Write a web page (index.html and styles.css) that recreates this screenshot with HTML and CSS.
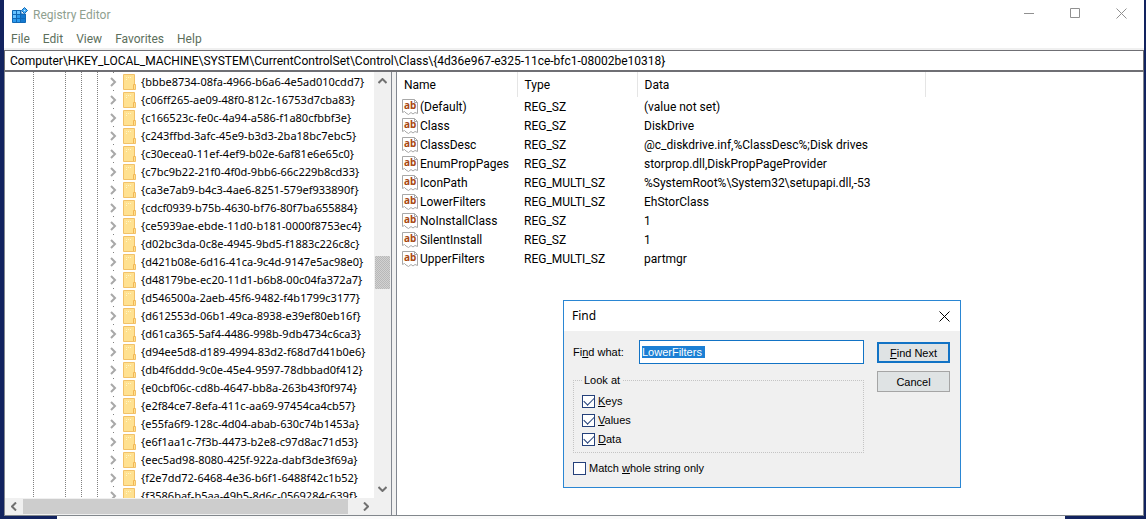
FILE: index.html
```
<!DOCTYPE html>
<html lang="en">
<head>
    <meta charset="UTF-8">
    <meta name="viewport" content="width=device-width, initial-scale=1.0">
    <title>Registry Editor</title>
    <link rel="stylesheet" href="styles.css">
</head>
<body>
    <svg class="symbols" aria-hidden="true">
        <symbol id="chevron" viewBox="0 0 8 10">
            <path d="M2 1 L6 5 L2 9" fill="none" stroke="#a8a8a8" stroke-width="2"/>
        </symbol>
        <symbol id="folder" viewBox="0 0 13 16">
            <path d="M.5 .5H11.5V10.5H12.5V15.5H.5Z" fill="#ffe191" stroke="#f2c168"/>
            <path d="M10.5 15V10.5H12" fill="none" stroke="#f2b654"/>
            <path d="M3.5 6V3.5H9" fill="none" stroke="#fff6c8" stroke-dasharray="1 1"/>
        </symbol>
        <symbol id="page" viewBox="0 0 16 16">
            <path d="M.5 .5H12.5L15.5 3.5V14.5L13 13.5L11 15L9 13.5L6.5 15.5L4 14L2.5 12.5L.5 13.5Z" fill="#fff" stroke="#a8a8a8"/>
            <path d="M12.5 .5V3.5H15.5" fill="none" stroke="#a8a8a8"/>
        </symbol>
    </svg>

    <div class="window">
        <header class="title-bar">
            <svg class="app-icon" width="17" height="17" viewBox="0 0 17 17">
                <path d="M.5 3.5H9V7H13.5V15.5H.5Z" fill="#2d9bee" stroke="#1168b5"/>
                <path d="M1 4H4V7H1Z M5 4H8V7H5Z M1 8H4V11H1Z" fill="#69c3ff"/>
                <path d="M9 8H13V15H9Z" fill="#1479cf"/>
                <path d="M.5 7.5H13.5M.5 11.5H13.5M4.5 3.5V15.5M8.5 3.5V15.5" stroke="#1168b5"/>
                <path d="M12.5 .5L15.5 3.5L12.5 6.5L9.5 3.5Z" fill="#4db1f7" stroke="#1168b5"/>
                <path d="M12 3H13V4H12Z" fill="#d8f1ff"/>
            </svg>
            <span class="title">Registry Editor</span>
            <div class="window-buttons">
                <button type="button" aria-label="Minimize"><svg width="11" height="11"><path d="M0 5.5H10"/></svg></button>
                <button type="button" aria-label="Maximize"><svg width="11" height="11"><path d="M.5 .5H9.5V9.5H.5Z"/></svg></button>
                <button type="button" aria-label="Close"><svg width="11" height="11"><path d="M.5 .5L10.5 10.5M10.5 .5L.5 10.5"/></svg></button>
            </div>
        </header>

        <nav class="menu">
            <button type="button">File</button>
            <button type="button">Edit</button>
            <button type="button">View</button>
            <button type="button">Favorites</button>
            <button type="button">Help</button>
        </nav>

        <input type="text" class="address" aria-label="Address" value="Computer\HKEY_LOCAL_MACHINE\SYSTEM\CurrentControlSet\Control\Class\{4d36e967-e325-11ce-bfc1-08002be10318}">

        <main class="panes">
            <section class="tree-pane">
                <ul class="tree" id="tree"></ul>
                <div class="scroll-v">
                    <svg width="9" height="6"><path d="M.5 5L4.5 1L8.5 5"/></svg>
                    <div class="track-v"><div class="thumb-v"></div></div>
                    <svg width="9" height="6"><path d="M.5 1L4.5 5L8.5 1"/></svg>
                </div>
                <div class="scroll-h">
                    <svg width="6" height="9"><path d="M5 .5L1 4.5L5 8.5"/></svg>
                    <div class="thumb-h"></div>
                    <svg width="6" height="9"><path d="M1 .5L5 4.5L1 8.5"/></svg>
                </div>
            </section>

            <section class="list-pane">
                <table class="values">
                    <colgroup><col class="col-name"><col class="col-type"><col class="col-data"><col></colgroup>
                    <thead>
                        <tr><th>Name</th><th>Type</th><th>Data</th><td></td></tr>
                    </thead>
                    <tbody id="values"></tbody>
                </table>
            </section>
        </main>
    </div>
    <footer class="desktop"><div class="window-behind"></div></footer>

    <form class="dialog" role="dialog" aria-labelledby="dialogTitle" onsubmit="return false">
        <div class="dialog-title">
            <span id="dialogTitle">Find</span>
            <button type="button" aria-label="Close"><svg width="11" height="11"><path d="M.5 .5L10.5 10.5M10.5 .5L.5 10.5"/></svg></button>
        </div>
        <div class="dialog-body">
            <div class="fields">
                <div class="find-row">
                    <label for="findInput">Fi<u>n</u>d what:</label>
                    <input type="text" id="findInput" value="LowerFilters ">
                </div>
                <fieldset>
                    <legend>Look at</legend>
                    <label><input type="checkbox" checked><span><u>K</u>eys</span></label>
                    <label><input type="checkbox" checked><span><u>V</u>alues</span></label>
                    <label><input type="checkbox" checked><span><u>D</u>ata</span></label>
                </fieldset>
                <label><input type="checkbox"><span>Match <u>w</u>hole string only</span></label>
            </div>
            <div class="actions">
                <button type="submit" class="default"><u>F</u>ind Next</button>
                <button type="button">Cancel</button>
            </div>
        </div>
    </form>

    <script>
        const keys = [
            '{bbbe8734-08fa-4966-b6a6-4e5ad010cdd7}',
            '{c06ff265-ae09-48f0-812c-16753d7cba83}',
            '{c166523c-fe0c-4a94-a586-f1a80cfbbf3e}',
            '{c243ffbd-3afc-45e9-b3d3-2ba18bc7ebc5}',
            '{c30ecea0-11ef-4ef9-b02e-6af81e6e65c0}',
            '{c7bc9b22-21f0-4f0d-9bb6-66c229b8cd33}',
            '{ca3e7ab9-b4c3-4ae6-8251-579ef933890f}',
            '{cdcf0939-b75b-4630-bf76-80f7ba655884}',
            '{ce5939ae-ebde-11d0-b181-0000f8753ec4}',
            '{d02bc3da-0c8e-4945-9bd5-f1883c226c8c}',
            '{d421b08e-6d16-41ca-9c4d-9147e5ac98e0}',
            '{d48179be-ec20-11d1-b6b8-00c04fa372a7}',
            '{d546500a-2aeb-45f6-9482-f4b1799c3177}',
            '{d612553d-06b1-49ca-8938-e39ef80eb16f}',
            '{d61ca365-5af4-4486-998b-9db4734c6ca3}',
            '{d94ee5d8-d189-4994-83d2-f68d7d41b0e6}',
            '{db4f6ddd-9c0e-45e4-9597-78dbbad0f412}',
            '{e0cbf06c-cd8b-4647-bb8a-263b43f0f974}',
            '{e2f84ce7-8efa-411c-aa69-97454ca4cb57}',
            '{e55fa6f9-128c-4d04-abab-630c74b1453a}',
            '{e6f1aa1c-7f3b-4473-b2e8-c97d8ac71d53}',
            '{eec5ad98-8080-425f-922a-dabf3de3f69a}',
            '{f2e7dd72-6468-4e36-b6f1-6488f42c1b52}',
            '{f3586baf-b5aa-49b5-8d6c-0569284c639f}'
        ];

        const values = [
            ['(Default)', 'REG_SZ', '(value not set)'],
            ['Class', 'REG_SZ', 'DiskDrive'],
            ['ClassDesc', 'REG_SZ', '@c_diskdrive.inf,%ClassDesc%;Disk drives'],
            ['EnumPropPages', 'REG_SZ', 'storprop.dll,DiskPropPageProvider'],
            ['IconPath', 'REG_MULTI_SZ', '%SystemRoot%\\System32\\setupapi.dll,-53'],
            ['LowerFilters', 'REG_MULTI_SZ', 'EhStorClass'],
            ['NoInstallClass', 'REG_SZ', '1'],
            ['SilentInstall', 'REG_SZ', '1'],
            ['UpperFilters', 'REG_MULTI_SZ', 'partmgr']
        ];

        document.getElementById('tree').innerHTML = keys.map(key =>
            `<li><svg class="chevron" width="8" height="10"><use href="#chevron"/></svg><svg width="13" height="16"><use href="#folder"/></svg><span>${key}</span></li>`
        ).join('');

        document.getElementById('values').innerHTML = values.map(([name, type, data]) =>
            `<tr><td><div class="name"><svg width="16" height="16"><use href="#page"/><text x="2" y="10" class="icon-text">ab</text></svg>${name}</div></td><td>${type}</td><td>${data}</td><td></td></tr>`
        ).join('');

        const findInput = document.getElementById('findInput');
        findInput.focus();
        findInput.select();
    </script>
</body>
</html>
```
FILE: styles.css
```
* {
    box-sizing: border-box;
}
body {
    display: flex;
    flex-direction: column;
    height: 100vh;
    margin: 0;
    overflow: hidden;
    background-color: #12235f;
    color: #000;
    font-family: Roboto, "Noto Sans", sans-serif;
    font-size: 12px;
    line-height: 18px;
}
button, input {
    margin: 0;
    padding: 0;
    border: none;
    border-radius: 0;
    background: none;
    color: inherit;
    font: inherit;
}
svg {
    flex: none;
}
.symbols {
    position: absolute;
    width: 0;
    height: 0;
}
.window {
    display: flex;
    flex-direction: column;
    flex: 1;
    min-height: 0;
    margin: 0 2px 0 4px;
    background-color: #fff;
}
.title-bar {
    display: flex;
    align-items: center;
    height: 30px;
    padding-left: 8px;
    color: #8f9f8f;
}
.title {
    flex: 1;
    padding-left: 4px;
}
.window-buttons {
    display: flex;
}
.window-buttons button {
    width: 46px;
    height: 28px;
}
.window-buttons path {
    fill: none;
    stroke: #909090;
}
.menu {
    display: flex;
    gap: 13px;
    height: 20px;
    padding-left: 7px;
    border-bottom: 2px solid #f0f0f0;
    color: #5c6f5c;
}
.address {
    flex: none;
    height: 22px;
    padding: 0 5px;
    border: 1px solid #6f6f74;
    border-bottom-width: 2px;
}
.panes {
    display: flex;
    flex: 1;
    min-height: 0;
    background-color: #f0f0f0;
    border-bottom: 1px solid #82878c;
}
.tree-pane {
    display: grid;
    grid-template: minmax(0, 1fr) 17px / minmax(0, 1fr) 17px;
    width: 388px;
    margin-right: 4px;
    border-left: 1px solid #828790;
    border-right: 1px solid #828790;
    background-color: #fff;
}
.tree {
    margin: 0;
    padding: 1px 0 0;
    list-style: none;
    overflow: hidden;
    font-family: "Noto Sans", "Open Sans", sans-serif;
    font-size: 11px;
    background:
        repeating-linear-gradient(#808080 0 1px, transparent 1px 2px) 28px 0 / 1px 100% no-repeat,
        repeating-linear-gradient(#808080 0 1px, transparent 1px 2px) 60px 0 / 1px 100% no-repeat,
        repeating-linear-gradient(#808080 0 1px, transparent 1px 2px) 76px 0 / 1px 100% no-repeat,
        repeating-linear-gradient(#808080 0 1px, transparent 1px 2px) 92px 0 / 1px 100% no-repeat,
        linear-gradient(#808080 0 1px, transparent 1px) 108px 0 / 1px 18px repeat-y;
}
.tree li {
    display: flex;
    align-items: center;
    height: 18px;
    padding-left: 104px;
    white-space: nowrap;
}
.chevron {
    margin-right: 6px;
}
.tree span {
    padding-left: 5px;
}
.scroll-v, .scroll-h {
    display: flex;
    align-items: center;
    background-color: #f0f0f0;
}
.scroll-v {
    flex-direction: column;
    padding: 6px 0;
}
.scroll-h {
    grid-column: 1 / -1;
    justify-content: space-between;
    padding: 0 22px 0 6px;
}
.scroll-v path, .scroll-h path {
    fill: none;
    stroke: #707070;
    stroke-width: 2;
}
.track-v {
    flex: 1;
    width: 15px;
    padding-top: 172px;
}
.thumb-v {
    height: 33px;
    background: repeating-conic-gradient(#b8b8b8 0 25%, #d2d2d2 0 50%) 0 0 / 2px 2px;
}
.thumb-h {
    flex: 1;
    height: 15px;
    margin: 0 15px 0 6px;
    background-color: #cdcdcd;
}
.list-pane {
    flex: 1;
    min-width: 0;
    border-left: 1px solid #828790;
    border-right: 1px solid #828790;
    background-color: #fff;
}
.values {
    width: 100%;
    border-collapse: collapse;
    table-layout: fixed;
}
.col-name {
    width: 120px;
}
.col-type {
    width: 120px;
}
.col-data {
    width: 288px;
}
.values th, .values td {
    height: 19px;
    padding: 0 0 0 7px;
    text-align: left;
    font-weight: normal;
    white-space: nowrap;
}
.values th {
    height: 25px;
    border-right: 1px solid #e5e5e5;
}
.values td:first-child {
    padding-left: 5px;
}
.name {
    display: flex;
    align-items: center;
    gap: 2px;
}
.icon-text {
    fill: #a84812;
    font: bold 10px "Noto Sans", sans-serif;
}
.desktop {
    height: 3px;
    padding: 0 81px 0 57px;
}
.window-behind {
    height: 3px;
    background-color: #fafafa;
}

/* Find dialog, floats over the value list */
.dialog {
    position: absolute;
    top: 300px;
    left: 563px;
    width: 398px;
    border: 1px solid #2a86d3;
    background-color: #f0f0f0;
    font-family: "Liberation Sans", Arial, sans-serif;
    font-size: 11px;
    line-height: 14px;
}
.dialog-title {
    display: flex;
    align-items: center;
    justify-content: space-between;
    height: 30px;
    padding: 0 10px 0 8px;
    background-color: #fff;
    font-family: "Noto Sans", "Open Sans", sans-serif;
    font-size: 12px;
}
.dialog-title button {
    display: flex;
}
.dialog-title path {
    stroke: #000;
}
.dialog-body {
    display: flex;
    gap: 13px;
    padding: 9px 10px 12px 9px;
}
.fields {
    flex: 1;
}
.find-row {
    display: flex;
    align-items: center;
    justify-content: space-between;
}
.find-row input {
    width: 225px;
    height: 24px;
    padding: 0 2px;
    border: 1px solid #1273c5;
    outline: none;
    background-color: #fff;
}
.find-row input::selection {
    background-color: #1b7fd4;
    color: #fff;
}
fieldset {
    display: flex;
    flex-direction: column;
    gap: 5px;
    margin: 9px 0 8px;
    padding: 7px 8px 6px;
    border: 1px dotted #c4c4c4;
}
legend {
    padding: 0 2px;
}
.fields label {
    display: flex;
    align-items: center;
    gap: 3px;
}
.fields .find-row label {
    display: block;
}
input[type="checkbox"] {
    appearance: none;
    flex: none;
    width: 13px;
    height: 13px;
    border: 1px solid #24407a;
    background-color: #fff;
}
input[type="checkbox"]:checked::before {
    content: "";
    display: block;
    width: 9px;
    height: 5px;
    margin: 1px;
    border: solid #24407a;
    border-width: 0 0 1px 1px;
    transform: rotate(-45deg);
}
.actions {
    display: flex;
    flex-direction: column;
    gap: 8px;
    width: 73px;
    padding-top: 2px;
}
.actions button {
    height: 21px;
    border: 1px solid #a5a5a5;
    background-color: #dfe3e4;
}
.actions .default {
    border: 2px solid #1273c5;
}
```
